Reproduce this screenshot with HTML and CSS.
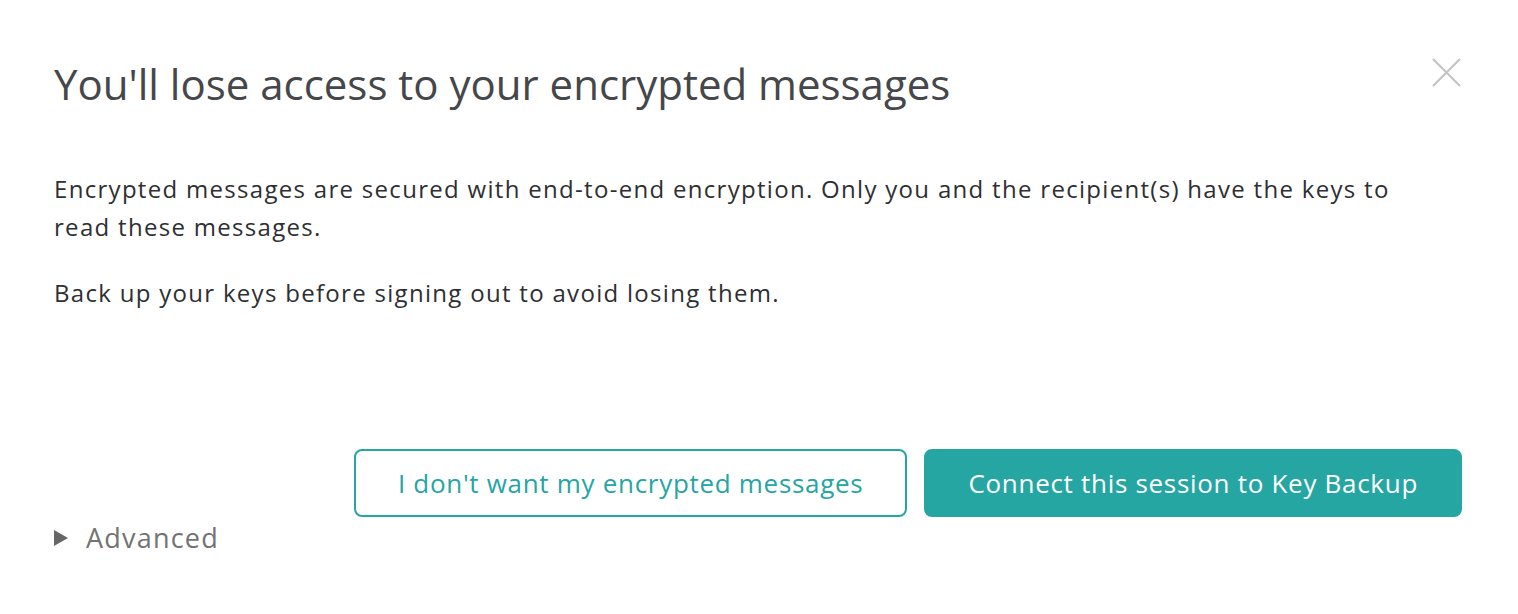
FILE: index.html
```html
<!DOCTYPE html>
<html>
<head>
<meta charset="utf-8">
<link rel="stylesheet" href="styles.css">
</head>
<body>
<div class="dialog">
  <div class="header">
    <h2 class="title">You'll lose access to your encrypted messages</h2>
    <button class="close" aria-label="Close">
      <svg width="29" height="29" viewBox="0 0 29 29"><path d="M1 1L28 28M28 1L1 28" stroke="#c4c4c4" stroke-width="2.2" fill="none"/></svg>
    </button>
  </div>
  <div class="content">
    <p>Encrypted messages are secured with end-to-end encryption. Only you and the recipient(s) have the keys to read these messages.</p>
    <p>Back up your keys before signing out to avoid losing them.</p>
  </div>
  <div class="buttons">
    <button class="btn btn-outline">I don't want my encrypted messages</button>
    <button class="btn btn-primary">Connect this session to Key Backup</button>
  </div>
  <div class="advanced">
    <span class="tri"></span>
    <span class="adv-label">Advanced</span>
  </div>
</div>
</body>
</html>
```
FILE: styles.css
```css
html, body {
  margin: 0;
  padding: 0;
  background: #ffffff;
}
body {
  font-family: "Open Sans", "Lato", sans-serif;
  color: #2e2f32;
}
.dialog {
  padding: 52px 56px 0 54px;
}
.header {
  display: flex;
  align-items: flex-start;
  justify-content: space-between;
}
.title {
  margin: 0;
  font-size: 42px;
  font-weight: 400;
  line-height: 64px;
  color: #45474a;
}
.close {
  border: 0;
  background: none;
  padding: 0;
  margin-top: 6px;
  margin-right: 1px;
  cursor: pointer;
}
.content {
  margin-top: 54px;
  padding-right: 40px;
  font-size: 24px;
  line-height: 38px;
  letter-spacing: 1.3px;
}
.content p {
  margin: 0 0 28px 0;
}
.content p:last-child {
  margin-bottom: 0;
}
.buttons {
  display: flex;
  justify-content: flex-end;
  gap: 17px;
  margin-top: 137px;
}
.btn {
  font-family: inherit;
  font-size: 26px;
  letter-spacing: 0.7px;
  height: 68px;
  border-radius: 8px;
  padding: 0 42px;
  cursor: pointer;
}
.btn-outline {
  background: #fff;
  color: #25a6a3;
  border: 2px solid #25a6a3;
}
.btn-primary {
  background: #25a6a3;
  color: #fff;
  border: 2px solid #25a6a3;
}
.advanced {
  display: flex;
  align-items: center;
  margin-top: 2px;
  color: #737373;
  font-size: 27px;
  letter-spacing: 1.2px;
}
.tri {
  width: 0;
  height: 0;
  border-top: 8px solid transparent;
  border-bottom: 8px solid transparent;
  border-left: 14px solid #666;
  margin-right: 18px;
}
```
